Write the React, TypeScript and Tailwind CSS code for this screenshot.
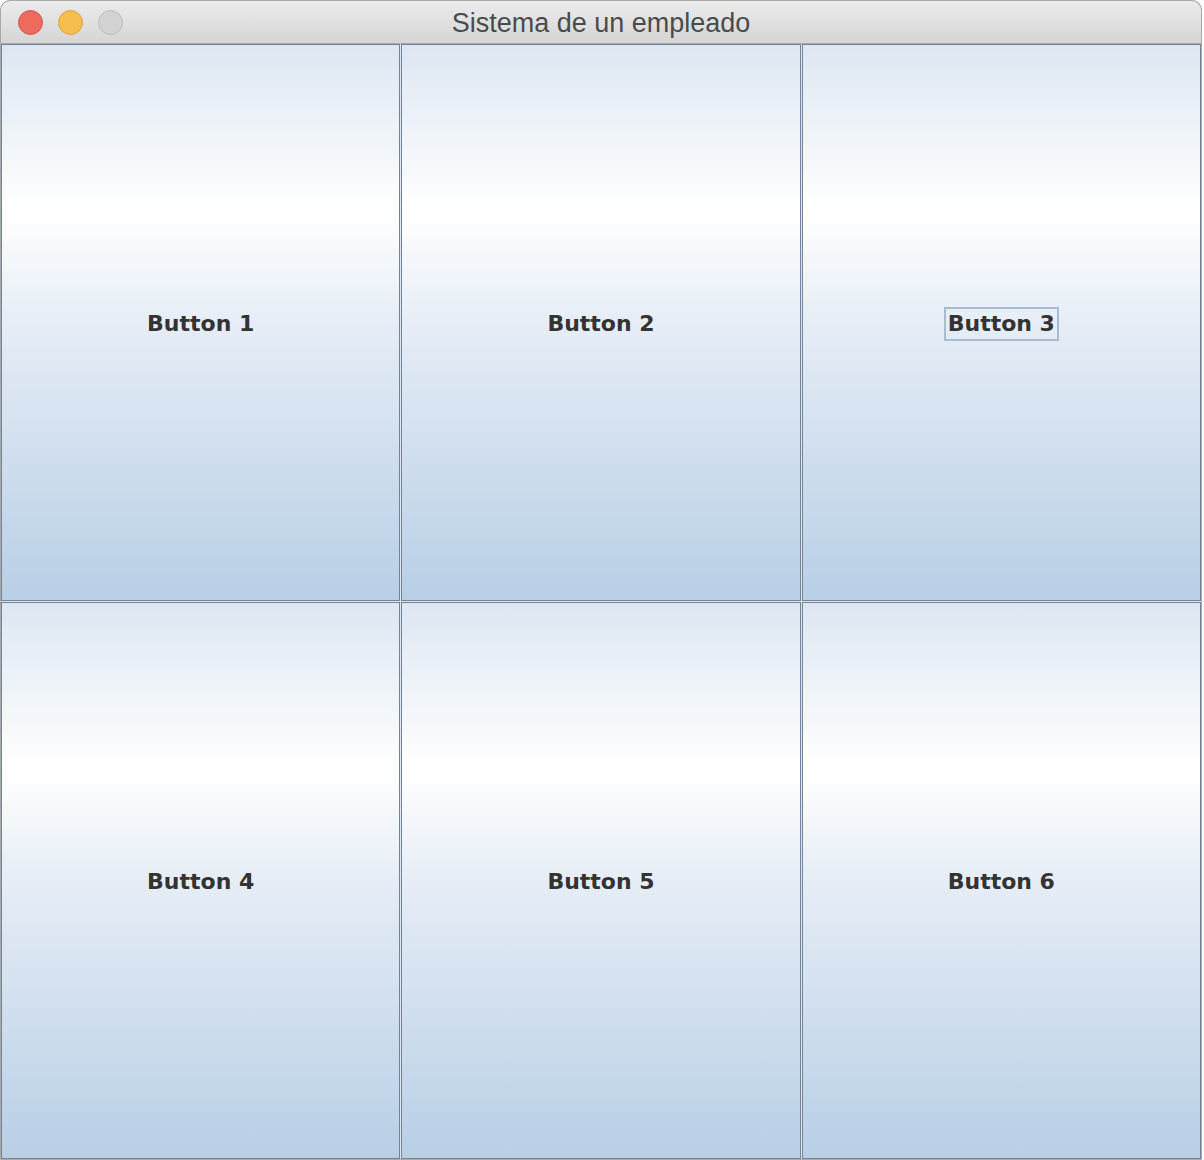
import React from 'react';

const botones = ['Button 1', 'Button 2', 'Button 3', 'Button 4', 'Button 5', 'Button 6'];

export default function App() {
  return (
    <div className="w-[1204px] h-[1160px] bg-white">
      <div className="w-[1202px] h-[1160px] flex flex-col rounded-t-[10px] border border-[#a9a9a9] overflow-hidden bg-[#7f8ea0]">
        {/* Barra de título */}
        <div className="relative h-[43px] shrink-0 flex items-center justify-center bg-gradient-to-b from-[#ececec] to-[#d5d5d5] border-b border-[#a8a8a8]">
          <div className="absolute left-[17px] top-[9px] flex gap-[15px]">
            <span className="w-[25px] h-[25px] rounded-full bg-[#ee6a5e] border border-[#d4574c]" />
            <span className="w-[25px] h-[25px] rounded-full bg-[#f6be4f] border border-[#dca33a]" />
            <span className="w-[25px] h-[25px] rounded-full bg-[#d2d2d2] border border-[#bcbcbc]" />
          </div>
          <span className="text-[27px] text-[#4b4b4b] font-['Liberation_Sans',Arial,sans-serif] pt-[3px]">
            Sistema de un empleado
          </span>
        </div>

        {/* Rejilla de botones */}
        <div className="flex-1 grid grid-cols-3 grid-rows-2 gap-px bg-[#dfe6ee]">
          {botones.map((texto, i) => (
            <button
              key={texto}
              className="flex items-center justify-center border border-[#72849a] bg-[linear-gradient(to_bottom,#dde7f2_0%,#ffffff_30%,#e6edf6_50%,#b8cfe6_100%)]"
            >
              <span
                className={`text-[22px] font-bold text-[#333333] font-['DejaVu_Sans',sans-serif] leading-none px-[2px] py-[4px] mt-[2px] border-2 ${
                  i === 2 ? 'border-[#a8bcd2]' : 'border-transparent'
                }`}
              >
                {texto}
              </span>
            </button>
          ))}
        </div>
      </div>
    </div>
  );
}
